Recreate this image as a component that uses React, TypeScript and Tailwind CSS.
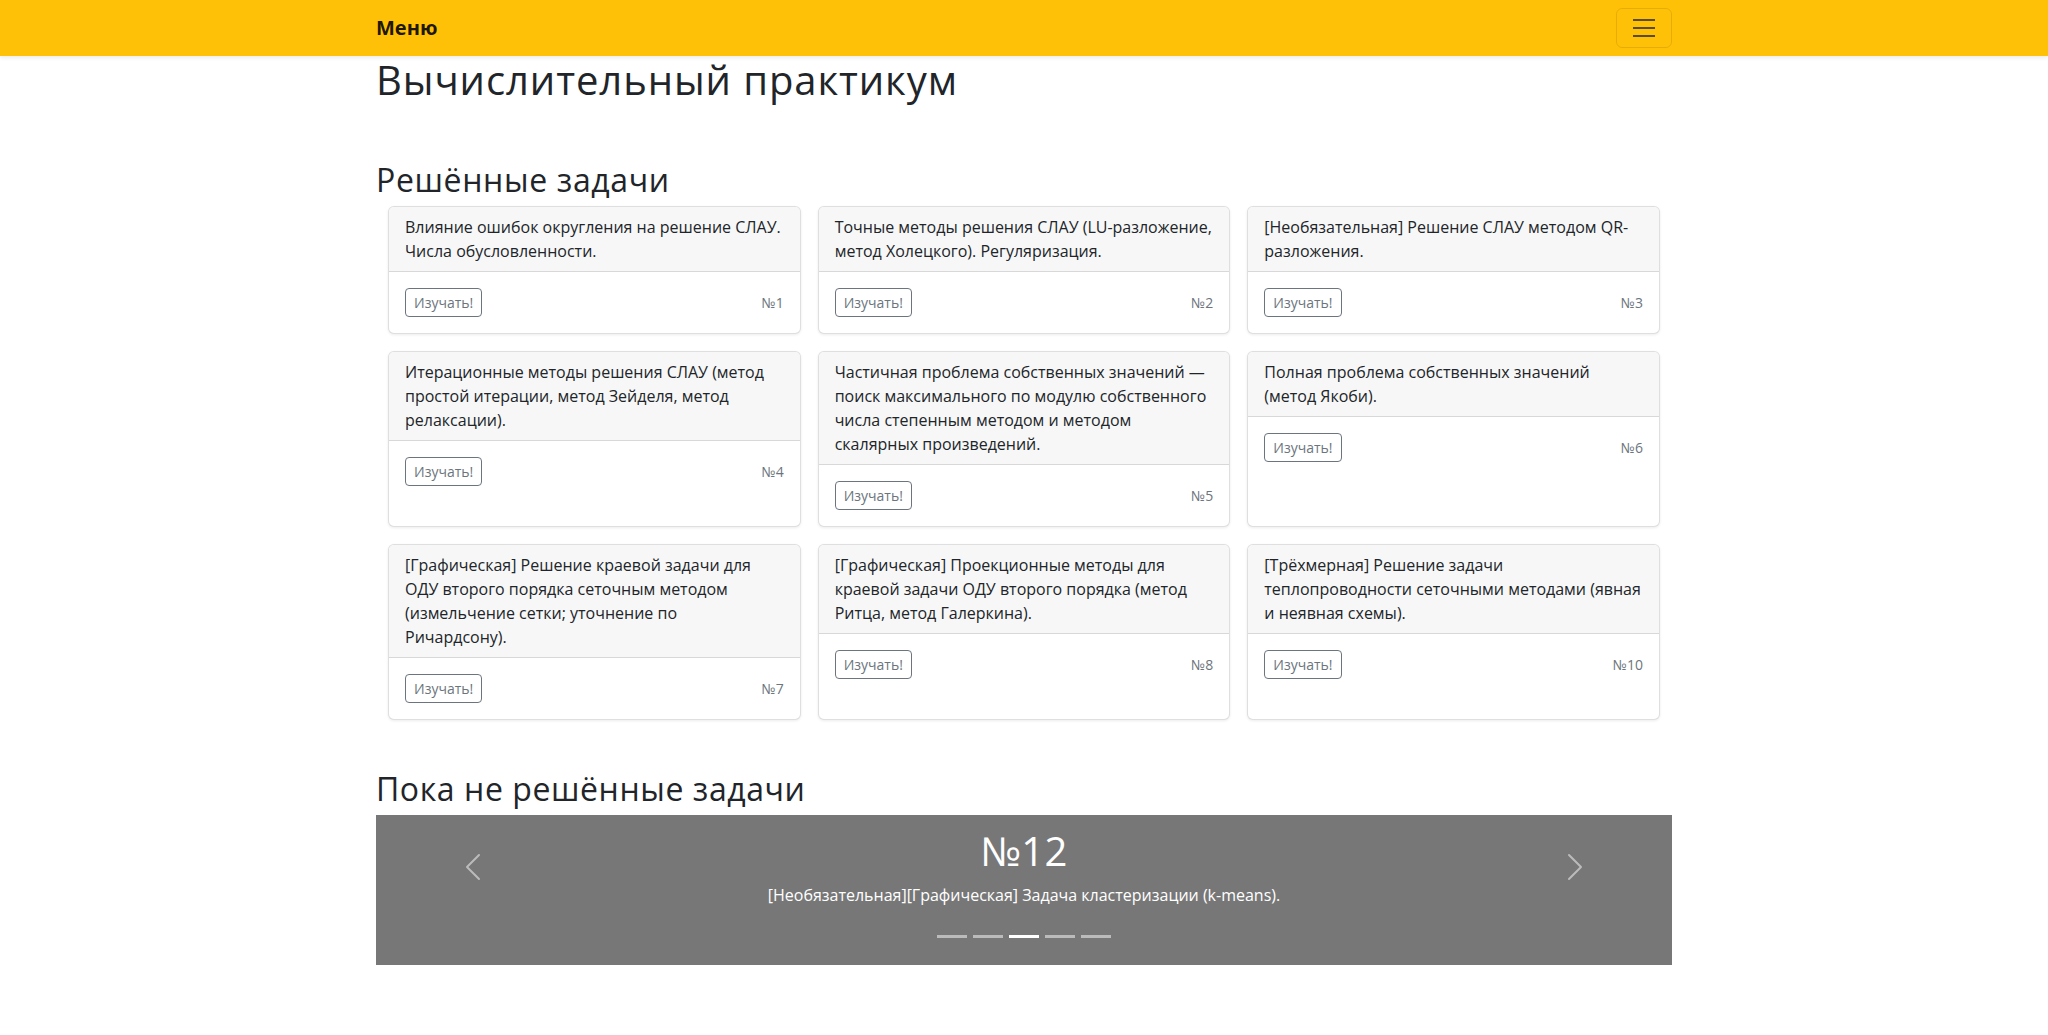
import React from "react";

const solved: { text: string; n: number }[] = [
  { text: "Влияние ошибок округления на решение СЛАУ. Числа обусловленности.", n: 1 },
  { text: "Точные методы решения СЛАУ (LU-разложение, метод Холецкого). Регуляризация.", n: 2 },
  { text: "[Необязательная] Решение СЛАУ методом QR-разложения.", n: 3 },
  { text: "Итерационные методы решения СЛАУ (метод простой итерации, метод Зейделя, метод релаксации).", n: 4 },
  { text: "Частичная проблема собственных значений — поиск максимального по модулю собственного числа степенным методом и методом скалярных произведений.", n: 5 },
  { text: "Полная проблема собственных значений (метод Якоби).", n: 6 },
  { text: "[Графическая] Решение краевой задачи для ОДУ второго порядка сеточным методом (измельчение сетки; уточнение по\nРичардсону).", n: 7 },
  { text: "[Графическая] Проекционные методы для краевой задачи ОДУ второго порядка (метод Ритца, метод Галеркина).", n: 8 },
  { text: "[Трёхмерная] Решение задачи теплопроводности сеточными методами (явная и неявная схемы).", n: 10 },
];

function Card({ text, n }: { text: string; n: number }) {
  return (
    <div className="flex flex-col rounded-[6px] border border-black/[0.125] bg-white shadow-[0_1px_3px_rgba(0,0,0,0.08)]">
      <div className="whitespace-pre-line rounded-t-[5px] border-b border-black/[0.125] bg-[#f7f7f7] px-4 py-2 text-base leading-6 text-[#212529]">
        {text}
      </div>
      <div className="flex items-center justify-between p-4">
        <button className="rounded-[4px] border border-[#6c757d] px-2 py-[3px] text-sm leading-[21px] text-[#6c757d]">
          Изучать!
        </button>
        <span className="text-sm leading-[21px] text-[#6c757d]">№{n}</span>
      </div>
    </div>
  );
}

function Chevron({ dir }: { dir: "left" | "right" }) {
  return (
    <svg width="32" height="32" viewBox="0 0 16 16" fill="#ffffff">
      {dir === "left" ? (
        <path d="M11.354 1.646a.5.5 0 0 1 0 .708L5.707 8l5.647 5.646a.5.5 0 0 1-.708.708l-6-6a.5.5 0 0 1 0-.708l6-6a.5.5 0 0 1 .708 0z" />
      ) : (
        <path d="M4.646 1.646a.5.5 0 0 1 .708 0l6 6a.5.5 0 0 1 0 .708l-6 6a.5.5 0 0 1-.708-.708L10.293 8 4.646 2.354a.5.5 0 0 1 0-.708z" />
      )}
    </svg>
  );
}

export default function App() {
  return (
    <div className="min-h-screen bg-white font-['Open_Sans',sans-serif] text-[#212529]">
      <nav className="relative z-10 bg-[#ffc107] shadow-[0_2px_4px_rgba(0,0,0,0.08)]">
        <div className="mx-auto flex h-[56px] w-[1320px] items-center justify-between px-3">
          <span className="text-xl font-bold leading-[30px] text-black/90">Меню</span>
          <button className="flex h-[40px] w-[56px] items-center justify-center rounded-[6px] border border-black/10">
            <svg width="30" height="30" viewBox="0 0 30 30">
              <path
                d="M4 7h22M4 15h22M4 23h22"
                stroke="rgba(33,37,41,0.75)"
                strokeWidth="2"
                strokeLinecap="butt"
              />
            </svg>
          </button>
        </div>
      </nav>

      <main className="mx-auto w-[1320px] px-3">
        <h1 className="text-[40px] font-medium leading-[48px] tracking-[0.023em]">Вычислительный практикум</h1>

        <h2 className="mt-[57px] text-[32px] font-medium leading-[38px] tracking-[0.02em]">Решённые задачи</h2>
        <div className="mt-[7px] grid grid-cols-3 gap-x-[17px] gap-y-[17px] px-3">
          {solved.map((c) => (
            <Card key={c.n} text={c.text} n={c.n} />
          ))}
        </div>

        <h2 className="mt-[50px] text-[32px] font-medium leading-[38px] tracking-[0.018em]">Пока не решённые задачи</h2>
        <div className="relative mt-[7px] flex h-[150px] flex-col items-center bg-[#777777] text-white">
          <div className="pt-[12px] text-[40px] font-medium leading-[48px] tracking-[0.01em]">№12</div>
          <p className="mt-2 text-base leading-6">
            [Необязательная][Графическая] Задача кластеризации (k-means).
          </p>
          <div className="mt-[28px] flex gap-[6px]">
            {[0, 1, 2, 3, 4].map((i) => (
              <span
                key={i}
                className={i === 2 ? "h-[3px] w-[30px] bg-white" : "h-[3px] w-[30px] bg-white/50"}
              />
            ))}
          </div>
          <div className="absolute left-0 top-0 flex h-[104px] w-[15%] items-center justify-center opacity-50">
            <Chevron dir="left" />
          </div>
          <div className="absolute right-0 top-0 flex h-[104px] w-[15%] items-center justify-center opacity-50">
            <Chevron dir="right" />
          </div>
        </div>
      </main>
    </div>
  );
}
